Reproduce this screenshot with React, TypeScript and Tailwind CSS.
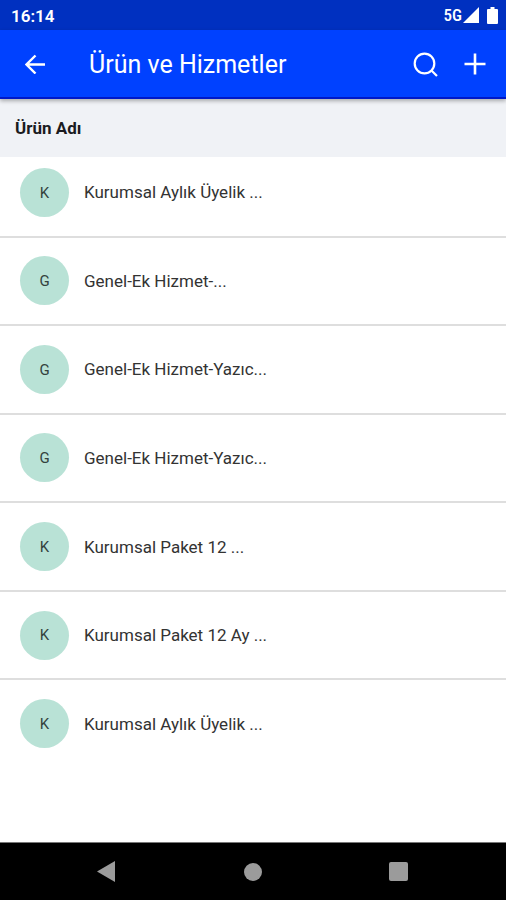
type Product = { id: number; name: string };

const products: Product[] = [
  { id: 1, name: "Kurumsal Aylık Üyelik ..." },
  { id: 2, name: "Genel-Ek Hizmet-..." },
  { id: 3, name: "Genel-Ek Hizmet-Yazıc..." },
  { id: 4, name: "Genel-Ek Hizmet-Yazıc..." },
  { id: 5, name: "Kurumsal Paket 12 ..." },
  { id: 6, name: "Kurumsal Paket 12 Ay ..." },
  { id: 7, name: "Kurumsal Aylık Üyelik ..." },
];

function StatusBar() {
  return (
    <div className="flex h-[30px] items-center justify-between bg-[#0030c0] pr-2 pl-[11px] text-white">
      <span className="pt-px text-[17px] leading-6 font-semibold">16:14</span>
      <div className="flex items-center">
        <span className="font-['Roboto_Condensed',Roboto,sans-serif] text-[17px] leading-5 font-medium">
          5G
        </span>
        <svg className="ml-px h-4 w-4" viewBox="0 0 16 16" fill="currentColor">
          <path d="M16 0v16H0z" />
        </svg>
        <svg className="ml-2 h-[17px] w-[11px]" viewBox="0 0 11 17" fill="currentColor">
          <path d="M3.500 0h4v2H10a1 1 0 0 1 1 1v13a1 1 0 0 1-1 1H1a1 1 0 0 1-1-1V3a1 1 0 0 1 1-1h2.500z" />
        </svg>
      </div>
    </div>
  );
}

function AppBar() {
  return (
    <header className="relative z-20 flex h-[69px] items-center border-b-2 border-[#0018c8] bg-[#0041ff] pr-5 pl-[25px] text-white shadow-[0_2px_4px_rgba(0,0,0,0.3)]">
      <button type="button" aria-label="Geri">
        <svg
          className="h-5 w-5"
          viewBox="0 0 20 20"
          fill="none"
          stroke="currentColor"
          strokeWidth="2.400"
        >
          <path d="M20 10.500H2M10.500 1.500L1.500 10.500l9 9" />
        </svg>
      </button>
      <h1 className="ml-11 flex-1 pt-0.5 text-[25px] leading-8">Ürün ve Hizmetler</h1>
      <div className="flex items-center gap-[26px]">
        <button type="button" aria-label="Ara">
          <svg
            className="h-6 w-6 overflow-visible"
            viewBox="0 0 24 24"
            fill="none"
            stroke="currentColor"
            strokeWidth="2.200"
          >
            <circle cx="10.500" cy="11.500" r="9.800" />
            <path d="M17.200 18.200l5.800 5.800" />
          </svg>
        </button>
        <button type="button" aria-label="Ekle">
          <svg
            className="h-[22px] w-[22px]"
            viewBox="0 0 22 22"
            stroke="currentColor"
            strokeWidth="2.600"
          >
            <path d="M11 0.500v21M0.500 11h21" />
          </svg>
        </button>
      </div>
    </header>
  );
}

function ProductRow({ name }: { name: string }) {
  return (
    <li className="flex items-center gap-[15px] border-b-2 border-[#dedede] px-5 last:border-transparent">
      <span className="flex size-[49px] items-center justify-center rounded-full bg-[#b9e2d6] pt-px text-[15px] text-[#34423e]">
        {name[0]}
      </span>
      <span className="text-[17px] leading-6 text-[#333333]">{name}</span>
    </li>
  );
}

function NavigationBar() {
  return (
    <nav className="grid h-[58px] grid-cols-[1fr_18px_1fr] items-center border-t border-[#777777] bg-black text-[#9b9b9b]">
      <button type="button" aria-label="Geri git" className="justify-self-center pr-8">
        <svg className="h-[21px] w-[18px]" viewBox="0 0 18 21" fill="currentColor">
          <path d="M18 0v21L0 10.500z" />
        </svg>
      </button>
      <button type="button" aria-label="Ana ekran" className="size-[18px] rounded-full bg-current" />
      <button type="button" aria-label="Son uygulamalar" className="justify-self-center pl-7">
        <span className="block size-[19px] rounded-xs bg-current" />
      </button>
    </nav>
  );
}

export default function App() {
  return (
    <div className="flex min-h-screen flex-col bg-white font-[Roboto,sans-serif]">
      <StatusBar />
      <AppBar />
      <main className="flex flex-1 flex-col pb-[73px]">
        <h2 className="relative z-10 h-[58px] bg-[#f0f2f6] px-[15px] pt-[17px] text-[17px] leading-6 font-bold text-[#1b1b1f]">
          Ürün Adı
        </h2>
        <ul className="-mt-2 grid flex-1 auto-rows-fr">
          {products.map((product) => (
            <ProductRow key={product.id} name={product.name} />
          ))}
        </ul>
      </main>
      <NavigationBar />
    </div>
  );
}
